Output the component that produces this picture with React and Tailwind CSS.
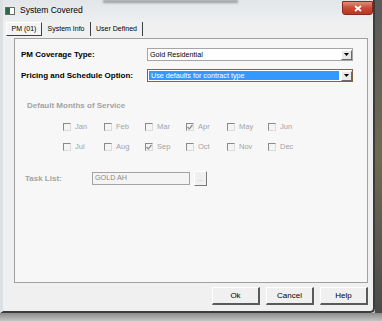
import React from "react";

const font = { fontFamily: '"Liberation Sans", Arial, sans-serif' };

const Check = ({ checked, label }) => (
  <div className="w-[41px] flex items-center gap-[4px]">
    <div className="w-[8px] h-[8px] bg-[#f4f4f4] border-t border-l border-t-[#8a8a8a] border-l-[#8a8a8a] border-b border-r border-b-[#dcdcdc] border-r-[#dcdcdc] flex items-center justify-center">
      {checked && (
        <svg width="6" height="6" viewBox="0 0 6 6">
          <path d="M0.5 3 L2.3 4.8 L5.5 1" fill="none" stroke="#8a8a8a" strokeWidth="1.2" />
        </svg>
      )}
    </div>
    <span className="text-[7.5px] text-[#a3a3a3] leading-none">{label}</span>
  </div>
);

const Arrow = () => (
  <div className="w-[11px] h-[10px] bg-[#e8e8e8] border-t border-l border-t-[#ffffff] border-l-[#ffffff] border-b border-r border-b-[#6a6a6a] border-r-[#6a6a6a] flex items-center justify-center">
    <svg width="5" height="3" viewBox="0 0 5 3">
      <path d="M0 0 H5 L2.5 3 Z" fill="#000" />
    </svg>
  </div>
);

const Button = ({ children }) => (
  <div className="w-[48px] h-[18px] bg-[#f0f0f0] border-t border-l border-t-[#ffffff] border-l-[#ffffff] border-b-2 border-r-2 border-b-[#5a5a5a] border-r-[#5a5a5a] flex items-center justify-center text-[8px] text-black">
    {children}
  </div>
);

export default function App() {
  const row1 = [
    ["Jan", false],
    ["Feb", false],
    ["Mar", false],
    ["Apr", true],
    ["May", false],
    ["Jun", false],
  ];
  const row2 = [
    ["Jul", false],
    ["Aug", false],
    ["Sep", true],
    ["Oct", false],
    ["Nov", false],
    ["Dec", false],
  ];

  return (
    <div className="w-[382px] h-[321px] overflow-hidden bg-[#b9b9b9] flex flex-col" style={font}>
      <div className="flex h-[313px]">
        <div className="w-[375px] h-[313px] flex flex-col bg-[#f0f0f0] border-l-[3px] border-l-[#dde0e3] border-r-2 border-b-2 border-r-[#3c3c3c] border-b-[#3c3c3c] rounded-br-[5px]">
          {/* title bar */}
          <div className="h-[21px] flex items-center bg-gradient-to-b from-[#e3e6e9] to-[#eceef0] pl-[2px]">
            <div className="w-[10px] h-[8px] border border-[#6a6a6a] bg-[#ffffff] flex">
              <div className="w-[4px] h-full bg-[#2d6a46]" />
            </div>
            <span className="ml-[5px] text-[8.5px] text-black">System Covered</span>
            <div className="ml-[20px] self-start w-[135px] h-[3px] bg-[#6b6b6b] opacity-60 blur-[1px]" />
            <div className="ml-auto self-start w-[31px] h-[14px] mt-[1px] rounded-b-[3px] bg-gradient-to-b from-[#e08b7a] via-[#c94a33] to-[#b8372a] border border-[#8a2a1e] flex items-center justify-center">
              <svg width="8" height="7" viewBox="0 0 8 7">
                <path d="M1 1 L7 6 M7 1 L1 6" stroke="#fff" strokeWidth="1.8" />
              </svg>
            </div>
          </div>

          {/* tabs */}
          <div className="h-[17px] flex items-start pl-[3px] pt-[1px] text-[7px] text-black">
            <div className="h-[14px] w-[36px] flex items-center justify-center border-t border-l border-t-[#ffffff] border-l-[#ffffff] border-b border-r border-b-[#404040] border-r-[#404040] bg-[#f4f4f4]">
              PM (01)
            </div>
            <div className="h-[14px] w-[49px] flex items-center justify-center border-r border-r-[#404040]">
              System Info
            </div>
            <div className="h-[14px] w-[52px] flex items-center justify-center border-r border-r-[#404040]">
              User Defined
            </div>
          </div>

          {/* panel */}
          <div className="ml-[11px] mr-[5px] h-[245px] bg-[#f7f7f7] border border-[#a0a0a0] flex flex-col pt-[9px]">
            <div className="flex items-center pl-[6px]">
              <span className="w-[126px] text-[8px] font-bold text-black">PM Coverage Type:</span>
              <div className="w-[206px] h-[13px] bg-white border border-[#a5a5a5] flex items-center">
                <span className="flex-1 pl-[2px] text-[7.2px] text-black leading-none">Gold Residential</span>
                <Arrow />
              </div>
            </div>
            <div className="flex items-center pl-[6px] mt-[8px]">
              <span className="w-[126px] text-[8px] font-bold text-black">Pricing and Schedule Option:</span>
              <div className="w-[206px] h-[13px] bg-white border border-[#7d6347] flex items-center">
                <div className="flex-1 h-[9px] ml-[1px] mr-[2px] bg-[#3399ff] flex items-center">
                  <span className="pl-[2px] text-[7.2px] text-white leading-none">Use defaults for contract type</span>
                </div>
                <Arrow />
              </div>
            </div>

            <div className="mt-[18px] pl-[12px] text-[8px] font-bold text-[#a3a3a3]">Default Months of Service</div>

            <div className="mt-[11px] ml-[48px] flex">
              {row1.map(([l, c]) => (
                <Check key={l} label={l} checked={c} />
              ))}
            </div>
            <div className="mt-[12px] ml-[48px] flex">
              {row2.map(([l, c]) => (
                <Check key={l} label={l} checked={c} />
              ))}
            </div>

            <div className="mt-[20px] flex items-center pl-[10px]">
              <span className="w-[67px] text-[8px] font-bold text-[#a3a3a3]">Task List:</span>
              <div className="w-[98px] h-[13px] bg-[#f4f4f4] border border-[#a3a3a3] flex items-center pl-[2px] text-[7.2px] text-[#8a8a8a]">
                GOLD AH
              </div>
              <div className="ml-[4px] w-[13px] h-[15px] bg-[#f0f0f0] border-t border-l border-t-[#ffffff] border-l-[#ffffff] border-b border-r border-b-[#7a7a7a] border-r-[#7a7a7a] flex items-end justify-center pb-[3px] text-[6px] text-[#a0a0a0] leading-none">
                ...
              </div>
            </div>
          </div>

          {/* buttons */}
          <div className="flex justify-end gap-[6px] mr-[5px] mt-[4px]">
            <Button>Ok</Button>
            <Button>Cancel</Button>
            <Button>Help</Button>
          </div>
        </div>
        <div className="flex-1 bg-gradient-to-b from-[#5a5a5a] via-[#6e6a52] to-[#4a4a4a]" />
      </div>
      <div className="flex-1 bg-gradient-to-b from-[#8c8c8c] to-[#c4c4c4]" />
    </div>
  );
}
